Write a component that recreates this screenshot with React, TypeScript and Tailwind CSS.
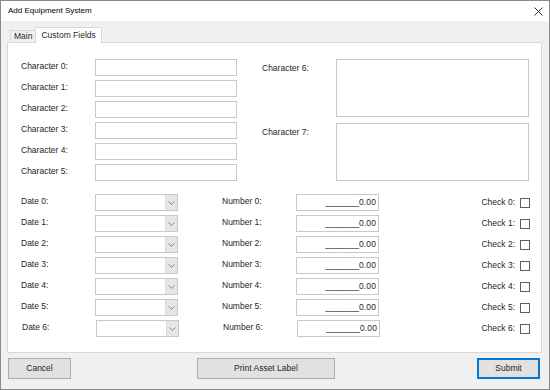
import React from "react";

const font = { fontFamily: '"Liberation Sans", Arial, sans-serif' };

function Chevron() {
  return (
    <svg width="7" height="4" viewBox="0 0 7 4" fill="none">
      <path d="M0.5 0.5 L3.5 3.3 L6.5 0.5" stroke="#7a7a7a" strokeWidth="0.9" />
    </svg>
  );
}

export default function App() {
  const chars = [0, 1, 2, 3, 4, 5];
  const seven = [0, 1, 2, 3, 4, 5, 6];
  return (
    <div
      className="w-[550px] h-[390px] border border-[#8a8a8a] bg-[#f0f0f0] flex flex-col text-[8.5px] text-[#262626] overflow-hidden"
      style={font}
    >
      {/* Title bar */}
      <div className="h-[20px] bg-white flex items-center justify-between pl-[7px] pr-[6px] shrink-0">
        <span className="text-[8px] text-black">Add Equipment System</span>
        <svg width="9" height="9" viewBox="0 0 9 9" fill="none">
          <path d="M0.5 0.5 L8.5 8.5 M8.5 0.5 L0.5 8.5" stroke="#222" strokeWidth="0.9" />
        </svg>
      </div>

      {/* Tab strip */}
      <div className="h-[21px] flex items-end pl-[9px] shrink-0">
        <div className="h-[12px] px-[3px] flex items-center border-t border-l border-[#d9d9d9] bg-[#f0f0f0] text-[8.5px]">
          Main
        </div>
        <div className="relative z-10 h-[16px] mb-[-1px] px-[5px] flex items-center bg-white border-t border-l border-r border-[#d9d9d9] text-[8.5px]">
          Custom Fields
        </div>
      </div>

      {/* Tab panel */}
      <div className="ml-[6px] mr-[7px] h-[311px] bg-white border border-[#d9d9d9] pt-[16px] pl-[13px] pr-[11px] shrink-0">
        {/* Top section */}
        <div className="flex">
          <div className="flex flex-col gap-[4px]">
            {chars.map((i) => (
              <div key={i} className="flex items-center h-[17px]">
                <span className="w-[74px] mt-[-2px]">Character {i}:</span>
                <div className="w-[142px] h-[17px] border border-[#c8c8c8] bg-white" />
              </div>
            ))}
          </div>
          <div className="ml-[25px] flex flex-col gap-[6px]">
            {[6, 7].map((i) => (
              <div key={i} className="flex">
                <span className="w-[74px] pt-[3px]">Character {i}:</span>
                <div className="w-[193px] h-[58px] border border-[#c8c8c8] bg-white" />
              </div>
            ))}
          </div>
        </div>

        {/* Bottom section */}
        <div className="flex mt-[13px]">
          <div className="flex flex-col gap-[4px]">
            {seven.map((i) => (
              <div key={i} className={`flex items-center h-[17px] ${i === 6 ? "pl-[1px]" : ""}`}>
                <span className="w-[74px] mt-[-2px]">Date {i}:</span>
                <div className="w-[83px] h-[17px] border border-[#c8c8c8] bg-white flex justify-end">
                  <div className="w-[12px] h-full bg-[#e6e6e6] border-l border-[#dcdcdc] flex items-center justify-center">
                    <Chevron />
                  </div>
                </div>
              </div>
            ))}
          </div>
          <div className="ml-[43px] flex flex-col gap-[4px]">
            {seven.map((i) => (
              <div key={i} className={`flex items-center h-[17px] ${i === 6 ? "pl-[1px]" : ""}`}>
                <span className="w-[74px] mt-[-2px]">Number {i}:</span>
                <div className="w-[83px] h-[17px] border border-[#c8c8c8] bg-white flex items-center justify-end pr-[2px]">
                  <span className="tracking-[0.1px]">_______0.00</span>
                </div>
              </div>
            ))}
          </div>
          <div className="flex-1 flex flex-col gap-[4px]">
            {seven.map((i) => (
              <div key={i} className="flex items-center justify-end h-[17px] gap-[5px]">
                <span className="mt-[-1px]">Check {i}:</span>
                <div className="w-[10px] h-[10px] border border-[#5f5f5f] bg-white" />
              </div>
            ))}
          </div>
        </div>
      </div>

      {/* Footer */}
      <div className="flex items-start pt-[5px] pl-[7px] pr-[9px]">
        <button className="w-[63px] h-[21px] bg-[#e1e1e1] border border-[#adadad] flex items-center justify-center text-[8.5px]">
          Cancel
        </button>
        <button className="ml-[126px] w-[138px] h-[21px] bg-[#e1e1e1] border border-[#adadad] flex items-center justify-center text-[8.5px]">
          Print Asset Label
        </button>
        <button className="ml-auto w-[63px] h-[21px] bg-[#e1e1e1] border-2 border-[#0078d7] flex items-center justify-center text-[8.5px]">
          Submit
        </button>
      </div>
    </div>
  );
}
